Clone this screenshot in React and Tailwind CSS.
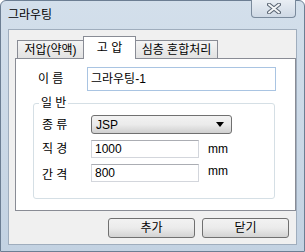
import React from 'react';

const FONT = { fontFamily: '"Liberation Sans", "Noto Sans CJK KR", sans-serif' };

const CloseGlyph = () => (
  <svg width="14" height="11" viewBox="0 0 14 11">
    <path d="M2 1.5 L12 9.5 M12 1.5 L2 9.5" stroke="#5a6573" strokeWidth="4" strokeLinecap="round" />
    <path d="M2 1.5 L12 9.5 M12 1.5 L2 9.5" stroke="#f4f6f8" strokeWidth="2" strokeLinecap="round" />
  </svg>
);

const TextBox = ({ value, className = '', blue = false }) => (
  <div
    className={`flex items-center pl-[3px] bg-white border text-[12px] leading-none ${
      blue ? 'border-[#a9c4e2]' : 'border-[#d3d6dc] border-t-[#abadb3]'
    } ${className}`}
  >
    {value}
  </div>
);

const Button = ({ children }) => (
  <div className="w-[87px] h-[20px] flex items-center justify-center rounded-[3px] border border-[#707070] bg-gradient-to-b from-[#f2f2f2] via-[#ebebeb] to-[#d3d3d3] text-[12px] leading-none">
    {children}
  </div>
);

export default function App() {
  return (
    <div
      className="w-[305px] h-[252px] flex flex-col border border-[#6c7e93] rounded-t-[6px] bg-gradient-to-b from-[#d3dfeb] to-[#c3d2e2] text-black"
      style={FONT}
    >
      {/* Title bar */}
      <div className="h-[28px] flex justify-between">
        <span className="self-center pl-[7px] text-[12px] leading-none">그라우팅</span>
        <div className="w-[45px] h-[18px] mr-[8px] -mt-px flex items-center justify-center rounded-b-[4px] border border-[#7a8a9c] border-t-0 bg-gradient-to-b from-[#e9eef4] to-[#cfd9e5]">
          <CloseGlyph />
        </div>
      </div>

      {/* Client area */}
      <div className="mx-[7px] h-[216px] border border-[#9fadbd] bg-[#f0f0f0] flex flex-col pt-[6px] pb-[6px]">
        {/* Tabs */}
        <div className="h-[22px] flex items-end pl-[8px] text-[12px] leading-none">
          <div className="w-[67px] h-[18px] flex items-center justify-center border border-b-0 border-[#898c95] bg-gradient-to-b from-[#f4f4f4] to-[#e2e2e2]">
            저압(약액)
          </div>
          <div className="w-[53px] h-[23px] -ml-px -mb-px relative z-10 flex items-center justify-center border border-b-0 border-[#898c95] bg-white">
            고 압
          </div>
          <div className="w-[83px] h-[18px] -ml-px flex items-center justify-center border border-b-0 border-[#898c95] bg-gradient-to-b from-[#f4f4f4] to-[#e2e2e2]">
            심층 혼합처리
          </div>
        </div>

        {/* Tab panel */}
        <div className="ml-[6px] h-[153px] border border-[#898c95] bg-white text-[12px] leading-none">
          <div className="mt-[8px] flex items-center pl-[22px]">
            <span className="w-[49px]">이 름</span>
            <TextBox value="그라우팅-1" blue className="w-[189px] h-[24px]" />
          </div>

          <div className="mt-[12px] ml-[17px] w-[242px] h-[96px] border border-[#d5dfe5] rounded-[3px]">
            <span className="block w-fit ml-[5px] px-[2px] -mt-[9px] h-[16px] leading-[16px] bg-white">일 반</span>

            <div className="mt-[4px] flex items-center pl-[8px]">
              <span className="w-[49px]">종 류</span>
              <div className="w-[141px] h-[19px] flex items-center justify-between pl-[4px] pr-[7px] rounded-[3px] border border-[#707070] bg-gradient-to-b from-[#f2f2f2] via-[#ebebeb] to-[#d0d0d0]">
                <span>JSP</span>
                <svg width="8" height="5" viewBox="0 0 8 5">
                  <path d="M0 0 H8 L4 5 Z" fill="#000" />
                </svg>
              </div>
            </div>

            <div className="mt-[6px] flex items-center pl-[8px]">
              <span className="w-[49px]">직 경</span>
              <TextBox value="1000" className="w-[108px] h-[18px]" />
              <span className="ml-[9px] -mt-px">mm</span>
            </div>

            <div className="mt-[6px] flex items-center pl-[8px]">
              <span className="w-[49px] mt-[4px]">간 격</span>
              <TextBox value="800" className="w-[108px] h-[18px]" />
              <span className="ml-[9px] -mt-[4px]">mm</span>
            </div>
          </div>
        </div>

        {/* Buttons */}
        <div className="mt-[7px] flex justify-end gap-[7px] pr-[7px]">
          <Button>추가</Button>
          <Button>닫기</Button>
        </div>
      </div>
    </div>
  );
}
